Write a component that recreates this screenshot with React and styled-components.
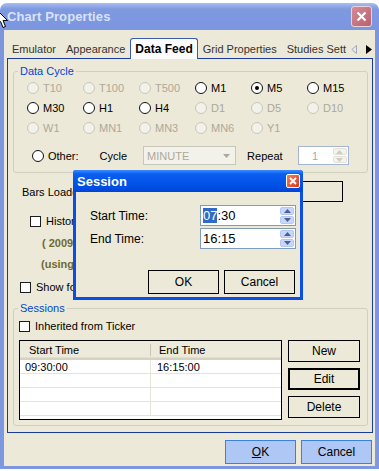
import React from "react";
import styled, { createGlobalStyle } from "styled-components";

const GlobalStyle = createGlobalStyle`
  * { box-sizing: border-box; }
  body {
    margin: 0;
    background: #fff;
    font-family: "Liberation Sans", Arial, sans-serif;
    font-size: 11px;
    color: #000;
  }
`;

const Stage = styled.div`
  position: relative;
  width: 379px;
  height: 471px;
  overflow: hidden;
  padding-top: 3px;
`;

// 바깥 창 (비활성 XP 프레임)
const Window = styled.div`
  width: 379px;
  height: 466px;
  display: flex;
  flex-direction: column;
  padding: 0 4px 3px;
  border-radius: 7px 7px 0 0;
  background: linear-gradient(180deg, #a9bdf0 0px, #7f99e1 6px, #7b95df 27px, #7d97e0 100%);
`;

const TitleBar = styled.div`
  height: 27px;
  display: flex;
  align-items: center;
  justify-content: space-between;
  padding: 0 3px 0 3px;
`;

const Title = styled.span`
  font-weight: bold;
  font-size: 13px;
  color: #d9e3f8;
  letter-spacing: 0.1px;
`;

const CloseBtn = styled.div`
  width: 21px;
  height: 21px;
  border: 1px solid #e9d3da;
  border-radius: 3px;
  background: linear-gradient(135deg, #d58c96, #b9606c);
  display: flex;
  align-items: center;
  justify-content: center;
`;

const Client = styled.div`
  flex: 1;
  background: #ece9d8;
  display: flex;
  flex-direction: column;
  padding: 0 2px 0 3px;
`;

const TabStrip = styled.div`
  height: 28px;
  display: flex;
  align-items: flex-end;
  position: relative;
  z-index: 1;
`;

const Tab = styled.div`
  height: 18px;
  line-height: 18px;
  padding: 0 5px;
  color: #333;
  white-space: nowrap;
`;

const ActiveTab = styled.div`
  height: 21px;
  line-height: 20px;
  padding: 0 4px;
  margin-bottom: -1px;
  background: #fcfcfe;
  border: 1px solid #3a5ab0;
  border-bottom: none;
  border-radius: 3px 3px 0 0;
  font-weight: bold;
  font-size: 12px;
  white-space: nowrap;
`;

const TabSep = styled.div`
  width: 1px;
  height: 14px;
  margin-bottom: 3px;
  background: #a8a594;
`;

const TabArrows = styled.div`
  margin-left: auto;
  margin-right: 5px;
  height: 18px;
  display: flex;
  align-items: center;
  gap: 9px;
`;

const Panel = styled.div`
  height: 375px;
  border: 1px solid #1a3c98;
  background: #ece9d8;
  display: flex;
  flex-direction: column;
  padding: 0 4px 0 5px;
`;

const Group = styled.fieldset`
  margin: ${(p) => p.$mt || 0}px 0 0;
  padding: 0 0 ${(p) => p.$pb || 0}px;
  border: 1px solid #d0d0bf;
  border-radius: 3px;
  min-width: 0;
`;

const Legend = styled.legend`
  color: #0046d5;
  padding: 0 2px;
  margin-left: 4px;
  line-height: 14px;
  font-size: 11px;
`;

const RadioGrid = styled.div`
  display: grid;
  grid-template-columns: repeat(6, 56px);
  grid-auto-rows: 20px;
  padding-left: 13px;
`;

const RadioItem = styled.label`
  display: flex;
  align-items: center;
  gap: 4px;
  color: ${(p) => (p.$disabled ? "#aca899" : "#000")};
`;

const Circle = styled.span`
  width: 12px;
  height: 12px;
  border-radius: 50%;
  border: 1px solid ${(p) => (p.$disabled ? "#c9c7ba" : "#111")};
  background: ${(p) => (p.$disabled ? "#f2f1ea" : "#fff")};
  display: flex;
  align-items: center;
  justify-content: center;
  flex-shrink: 0;
  &::after {
    content: "";
    display: ${(p) => (p.$checked ? "block" : "none")};
    width: 4px;
    height: 4px;
    border-radius: 50%;
    background: #000;
  }
`;

const OtherRow = styled.div`
  height: 21px;
  margin-top: 7px;
  display: flex;
  align-items: center;
  padding-left: 18px;
`;

const Text = styled.span`
  margin-left: ${(p) => p.$ml || 0}px;
  color: ${(p) => p.$color || "inherit"};
  font-weight: ${(p) => (p.$bold ? "bold" : "normal")};
  white-space: nowrap;
`;

const Combo = styled.div`
  width: 93px;
  height: 19px;
  margin-left: 16px;
  border: 1px solid #c9c7ba;
  background: #f3f2ea;
  color: #aca899;
  display: flex;
  align-items: center;
  justify-content: space-between;
  padding: 0 5px 0 3px;
`;

const Spin = styled.div`
  width: 51px;
  height: 19px;
  margin-left: 15px;
  border: 1px solid #a4b6d2;
  background: #fff;
  display: flex;
  align-items: stretch;
`;

const SpinValue = styled.div`
  flex: 1;
  display: flex;
  align-items: center;
  justify-content: center;
  color: ${(p) => (p.$disabled ? "#aca899" : "#000")};
`;

const SpinButtons = styled.div`
  width: 16px;
  display: flex;
  flex-direction: column;
  gap: 1px;
  padding: 1px;
`;

const SpinBtn = styled.div`
  flex: 1;
  border-radius: 2px;
  background: ${(p) => (p.$disabled ? "#f4f3ee" : "#c6d6fc")};
  border: 1px solid ${(p) => (p.$disabled ? "#e4e2d8" : "#b4c8f6")};
  display: flex;
  align-items: center;
  justify-content: center;
`;

const Row = styled.div`
  height: ${(p) => p.$h || 20}px;
  margin-top: ${(p) => p.$mt || 0}px;
  padding-left: ${(p) => p.$pl || 0}px;
  display: flex;
  align-items: center;
`;

const BarsBox = styled.div`
  width: 84px;
  height: 21px;
  margin-left: auto;
  margin-right: 25px;
  border: 1px solid #000;
  background: #ece9d8;
`;

const Check = styled.span`
  width: 11px;
  height: 11px;
  border: 1px solid #1c1c1c;
  background: #fff;
  margin-right: 5px;
  flex-shrink: 0;
`;

const SessionsBody = styled.div`
  display: flex;
  gap: 6px;
  margin-top: 4px;
  padding-left: 5px;
`;

const List = styled.div`
  width: 263px;
  height: 80px;
  border: 1px solid #000;
  background: #fff;
  overflow: hidden;
`;

const ListHeader = styled.div`
  height: 19px;
  display: grid;
  grid-template-columns: 131px 1fr;
  background: #ebeadb;
  border-bottom: 2px solid #d6d2c2;
  box-shadow: inset 0 -1px 0 #e2decd;
`;

const HeadCell = styled.div`
  display: flex;
  align-items: center;
  padding-left: ${(p) => p.$pl}px;
  border-right: ${(p) => (p.$sep ? "1px solid #c7c4b4" : "none")};
  margin: 3px 0;
`;

const ListRow = styled.div`
  height: 14px;
  display: grid;
  grid-template-columns: 131px 1fr;
  border-bottom: 1px solid #e6e4d6;
`;

const Cell = styled.div`
  display: flex;
  align-items: center;
  padding-left: ${(p) => p.$pl}px;
  border-right: ${(p) => (p.$sep ? "1px solid #e6e4d6" : "none")};
`;

const SideButtons = styled.div`
  display: flex;
  flex-direction: column;
  gap: 6px;
`;

const Button = styled.div`
  width: ${(p) => p.$w || 72}px;
  height: ${(p) => p.$h || 22}px;
  border: ${(p) => (p.$default ? "2px" : "1px")} solid #000;
  background: #ece9d8;
  display: flex;
  align-items: center;
  justify-content: center;
  font-size: 12px;
`;

const Footer = styled.div`
  display: flex;
  justify-content: flex-end;
  gap: 5px;
  margin-top: 7px;
  padding-right: 1px;
`;

const FooterButton = styled.div`
  width: 71px;
  height: 24px;
  border: 1px solid #3a80e4;
  background: #aec7f4;
  display: flex;
  align-items: center;
  justify-content: center;
  font-size: 12px;
  u { text-decoration: underline; }
`;

// 세션 대화상자 (겹쳐진 모달)
const Dialog = styled.div`
  position: absolute;
  left: 73px;
  top: 170px;
  width: 230px;
  height: 130px;
  background: #0a4ee6;
  padding: 0 3px 3px;
  display: flex;
  flex-direction: column;
  border-radius: 3px 3px 0 0;
  z-index: 5;
`;

const DialogTitle = styled.div`
  height: 22px;
  display: flex;
  align-items: center;
  justify-content: space-between;
  margin: 0 -3px;
  padding: 0 3px 0 4px;
  background: linear-gradient(180deg, #3d8bff 0px, #0a5ef0 4px, #0050e6 16px, #0044d8 100%);
  border-radius: 3px 3px 0 0;
  color: #fff;
  font-weight: bold;
  font-size: 13px;
`;

const DialogClose = styled.div`
  width: 14px;
  height: 14px;
  border: 1px solid #fff;
  border-radius: 2px;
  background: linear-gradient(135deg, #f07f5e, #d73b18);
  display: flex;
  align-items: center;
  justify-content: center;
`;

const DialogBody = styled.div`
  flex: 1;
  background: #ece9d8;
  padding: 13px 4px 0 14px;
  display: flex;
  flex-direction: column;
`;

const FieldRow = styled.div`
  display: flex;
  align-items: center;
  justify-content: space-between;
  height: 21px;
  margin-bottom: 2px;
  font-size: 12px;
`;

const TimeInput = styled.div`
  width: 96px;
  height: 21px;
  border: 1px solid #7f9db9;
  background: #fff;
  display: flex;
  align-items: stretch;
`;

const TimeValue = styled.div`
  flex: 1;
  display: flex;
  align-items: center;
  padding-left: 2px;
  font-size: 13px;
`;

const Selected = styled.span`
  background: #316ac5;
  color: #fff;
`;

const DialogButtons = styled.div`
  display: flex;
  justify-content: flex-end;
  gap: 5px;
  margin-top: 19px;
  padding-right: 1px;
`;

const Cursor = styled.svg`
  position: absolute;
  left: -4px;
  top: 9px;
  z-index: 10;
`;

const Up = ({ c = "#4d6185" }) => (
  <svg width="7" height="4" viewBox="0 0 7 4"><path d="M0 4 L3.5 0 L7 4 Z" fill={c} /></svg>
);
const Down = ({ c = "#4d6185" }) => (
  <svg width="7" height="4" viewBox="0 0 7 4"><path d="M0 0 L3.5 4 L7 0 Z" fill={c} /></svg>
);

const cycles = [
  ["T10", 1], ["T100", 1], ["T500", 1], ["M1", 0], ["M5", 0, 1], ["M15", 0],
  ["M30", 0], ["H1", 0], ["H4", 0], ["D1", 1], ["D5", 1], ["D10", 1],
  ["W1", 1], ["MN1", 1], ["MN3", 1], ["MN6", 1], ["Y1", 1],
];

const App = () => {
  return (
    <>
      <GlobalStyle />
      <Stage>
        <Window>
          <TitleBar>
            <Title>Chart Properties</Title>
            <CloseBtn>
              <svg width="11" height="11" viewBox="0 0 11 11">
                <path d="M1.5 1.5 L9.5 9.5 M9.5 1.5 L1.5 9.5" stroke="#fff" strokeWidth="2.2" />
              </svg>
            </CloseBtn>
          </TitleBar>
          <Client>
            <TabStrip>
              <Tab>Emulator</Tab>
              <TabSep />
              <Tab>Appearance</Tab>
              <ActiveTab>Data Feed</ActiveTab>
              <Tab>Grid Properties</Tab>
              <TabSep />
              <Tab>Studies Sett</Tab>
              <TabArrows>
                <svg width="6" height="9" viewBox="0 0 6 9"><path d="M5.5 0.5 L0.8 4.5 L5.5 8.5 Z" fill="none" stroke="#a0a8c8" /></svg>
                <svg width="6" height="9" viewBox="0 0 6 9"><path d="M0 0 L6 4.5 L0 9 Z" fill="#000" /></svg>
              </TabArrows>
            </TabStrip>
            <Panel>
              <Group $mt={5} $pb={6}>
                <Legend>Data Cycle</Legend>
                <RadioGrid>
                  {cycles.map(([label, dis, chk]) => (
                    <RadioItem key={label} $disabled={dis}>
                      <Circle $disabled={dis} $checked={chk} />
                      {label}
                    </RadioItem>
                  ))}
                </RadioGrid>
                <OtherRow>
                  <RadioItem>
                    <Circle />
                    Other:
                  </RadioItem>
                  <Text $ml={21}>Cycle</Text>
                  <Combo>
                    MINUTE
                    <Down c="#aca899" />
                  </Combo>
                  <Text $ml={11}>Repeat</Text>
                  <Spin>
                    <SpinValue $disabled>1</SpinValue>
                    <SpinButtons>
                      <SpinBtn $disabled><Up c="#cfcdc2" /></SpinBtn>
                      <SpinBtn $disabled><Down c="#cfcdc2" /></SpinBtn>
                    </SpinButtons>
                  </Spin>
                </OtherRow>
              </Group>

              <Row $h={21} $mt={8} $pl={9}>
                <Text>Bars Loaded:</Text>
                <BarsBox />
              </Row>
              <Row $mt={9} $pl={17}>
                <Check />
                <Text>Historical data loaded</Text>
              </Row>
              <Row $mt={2} $pl={29}>
                <Text $bold $color="#6f6a34">( 2009/01/02 - 2009/06/30 )</Text>
              </Row>
              <Row $mt={1} $pl={28}>
                <Text $bold $color="#6f6a34">(using local cache)</Text>
              </Row>
              <Row $mt={3} $pl={7}>
                <Check />
                <Text>Show forming bar</Text>
              </Row>

              <Group $mt={4} $pb={5}>
                <Legend>Sessions</Legend>
                <Row $mt={1} $pl={5}>
                  <Check />
                  <Text>Inherited from Ticker</Text>
                </Row>
                <SessionsBody>
                  <List>
                    <ListHeader>
                      <HeadCell $pl={9} $sep>Start Time</HeadCell>
                      <HeadCell $pl={8}>End Time</HeadCell>
                    </ListHeader>
                    <ListRow>
                      <Cell $pl={5} $sep>09:30:00</Cell>
                      <Cell $pl={6}>16:15:00</Cell>
                    </ListRow>
                    <ListRow><Cell $sep /><Cell /></ListRow>
                    <ListRow><Cell $sep /><Cell /></ListRow>
                    <ListRow><Cell $sep /><Cell /></ListRow>
                  </List>
                  <SideButtons>
                    <Button>New</Button>
                    <Button $default>Edit</Button>
                    <Button>Delete</Button>
                  </SideButtons>
                </SessionsBody>
              </Group>
            </Panel>
            <Footer>
              <FooterButton><u>O</u>K</FooterButton>
              <FooterButton>Cancel</FooterButton>
            </Footer>
          </Client>
        </Window>

        <Dialog>
          <DialogTitle>
            Session
            <DialogClose>
              <svg width="8" height="8" viewBox="0 0 8 8">
                <path d="M1 1 L7 7 M7 1 L1 7" stroke="#fff" strokeWidth="1.8" />
              </svg>
            </DialogClose>
          </DialogTitle>
          <DialogBody>
            <FieldRow>
              Start Time:
              <TimeInput>
                <TimeValue><Selected>07</Selected>:30</TimeValue>
                <SpinButtons>
                  <SpinBtn><Up /></SpinBtn>
                  <SpinBtn><Down /></SpinBtn>
                </SpinButtons>
              </TimeInput>
            </FieldRow>
            <FieldRow>
              End Time:
              <TimeInput>
                <TimeValue>16:15</TimeValue>
                <SpinButtons>
                  <SpinBtn><Up /></SpinBtn>
                  <SpinBtn><Down /></SpinBtn>
                </SpinButtons>
              </TimeInput>
            </FieldRow>
            <DialogButtons>
              <Button $w={71} $h={24}>OK</Button>
              <Button $w={71} $h={24}>Cancel</Button>
            </DialogButtons>
          </DialogBody>
        </Dialog>

        <Cursor width="13" height="21" viewBox="0 0 13 21">
          <path d="M1 1 L1 16 L4.5 12.5 L7 18.5 L9.5 17.5 L7 11.5 L11.5 11.5 Z" fill="#fff" stroke="#000" strokeWidth="1" />
        </Cursor>
      </Stage>
    </>
  );
};

export default App;
